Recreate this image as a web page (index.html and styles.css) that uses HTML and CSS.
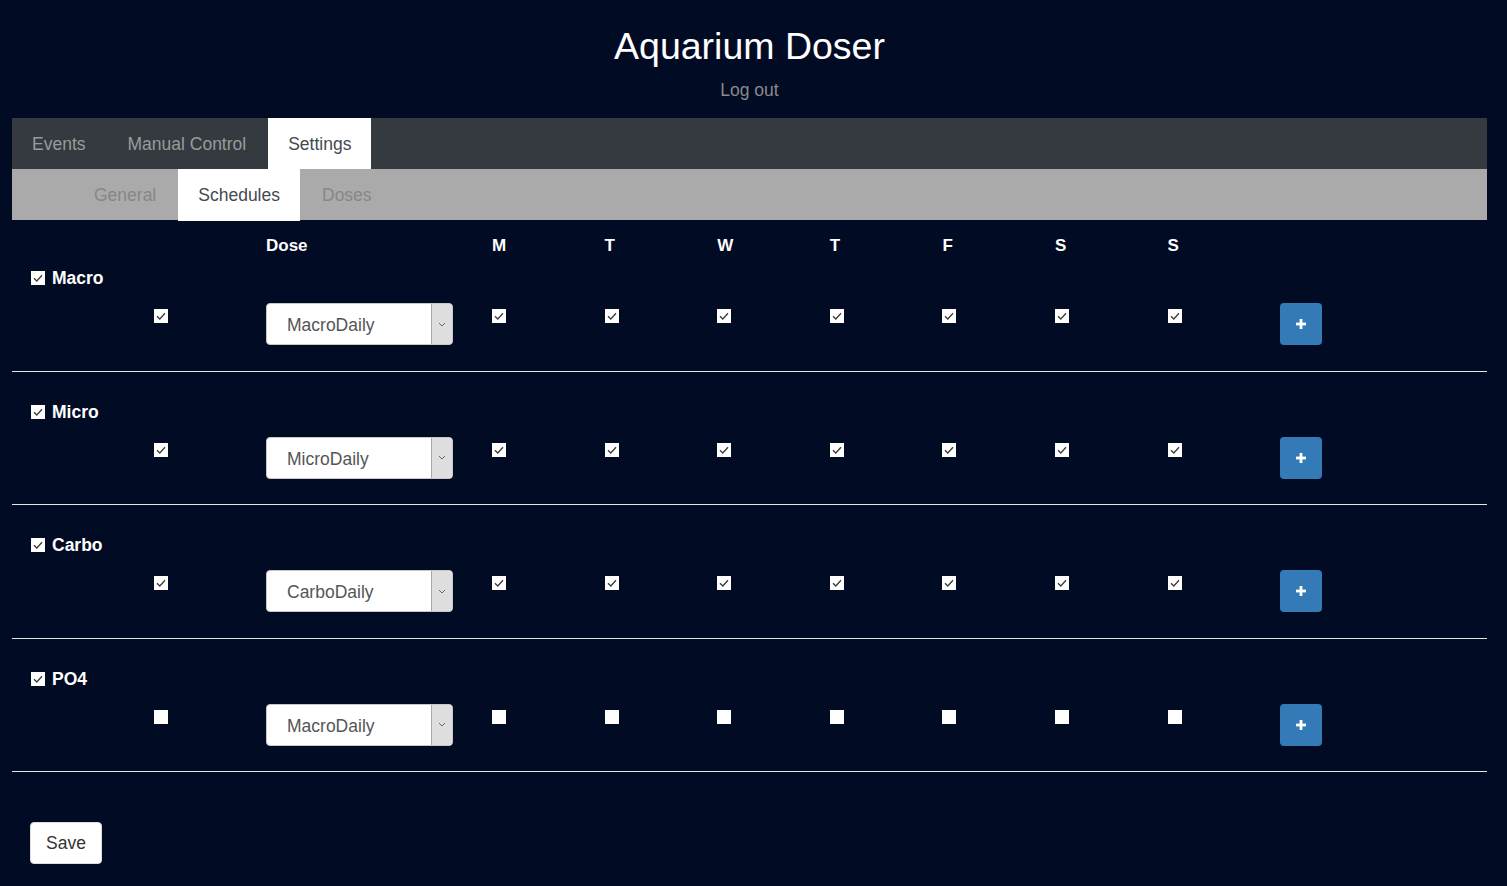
FILE: index.html
```html
<!DOCTYPE html>
<html lang="en">
<head>
<meta charset="utf-8">
<title>Aquarium Doser</title>
<link rel="stylesheet" href="styles.css">
</head>
<body>
<div class="container">
  <header class="page-head">
    <h1 class="title">Aquarium Doser</h1>
    <a class="logout">Log out</a>
  </header>
  <nav class="tabs main-tabs">
    <span class="tab">Events</span>
    <span class="tab">Manual Control</span>
    <span class="tab active">Settings</span>
  </nav>
  <nav class="tabs sub-tabs">
    <span class="tab">General</span>
    <span class="tab active">Schedules</span>
    <span class="tab">Doses</span>
  </nav>

  <section class="sched first">
    <div class="grid head">
      <span></span><span></span>
      <span class="hd">Dose</span>
      <span class="hd">M</span><span class="hd">T</span><span class="hd">W</span><span class="hd">T</span><span class="hd">F</span><span class="hd">S</span><span class="hd">S</span>
      <span></span>
    </div>
    <div class="name"><span class="cb"><svg viewBox="0 0 14 14"><polyline points="3,7.2 5.8,10 11,4.2"/></svg></span>Macro</div>
    <div class="grid line">
      <span></span>
      <span class="cb"><svg viewBox="0 0 14 14"><polyline points="3,7.2 5.8,10 11,4.2"/></svg></span>
      <div class="select"><span class="val">MacroDaily</span><span class="arrow"><svg viewBox="0 0 8 5"><polyline points="1,1 4,4 7,1"/></svg></span></div>
      <span class="cb"><svg viewBox="0 0 14 14"><polyline points="3,7.2 5.8,10 11,4.2"/></svg></span>
      <span class="cb"><svg viewBox="0 0 14 14"><polyline points="3,7.2 5.8,10 11,4.2"/></svg></span>
      <span class="cb"><svg viewBox="0 0 14 14"><polyline points="3,7.2 5.8,10 11,4.2"/></svg></span>
      <span class="cb"><svg viewBox="0 0 14 14"><polyline points="3,7.2 5.8,10 11,4.2"/></svg></span>
      <span class="cb"><svg viewBox="0 0 14 14"><polyline points="3,7.2 5.8,10 11,4.2"/></svg></span>
      <span class="cb"><svg viewBox="0 0 14 14"><polyline points="3,7.2 5.8,10 11,4.2"/></svg></span>
      <span class="cb"><svg viewBox="0 0 14 14"><polyline points="3,7.2 5.8,10 11,4.2"/></svg></span>
      <button class="plus"><svg viewBox="0 0 10 10"><rect x="3.6" y="0" width="2.8" height="10"/><rect x="0" y="3.6" width="10" height="2.8"/></svg></button>
    </div>
  </section>

  <section class="sched">
    <div class="name"><span class="cb"><svg viewBox="0 0 14 14"><polyline points="3,7.2 5.8,10 11,4.2"/></svg></span>Micro</div>
    <div class="grid line">
      <span></span>
      <span class="cb"><svg viewBox="0 0 14 14"><polyline points="3,7.2 5.8,10 11,4.2"/></svg></span>
      <div class="select"><span class="val">MicroDaily</span><span class="arrow"><svg viewBox="0 0 8 5"><polyline points="1,1 4,4 7,1"/></svg></span></div>
      <span class="cb"><svg viewBox="0 0 14 14"><polyline points="3,7.2 5.8,10 11,4.2"/></svg></span>
      <span class="cb"><svg viewBox="0 0 14 14"><polyline points="3,7.2 5.8,10 11,4.2"/></svg></span>
      <span class="cb"><svg viewBox="0 0 14 14"><polyline points="3,7.2 5.8,10 11,4.2"/></svg></span>
      <span class="cb"><svg viewBox="0 0 14 14"><polyline points="3,7.2 5.8,10 11,4.2"/></svg></span>
      <span class="cb"><svg viewBox="0 0 14 14"><polyline points="3,7.2 5.8,10 11,4.2"/></svg></span>
      <span class="cb"><svg viewBox="0 0 14 14"><polyline points="3,7.2 5.8,10 11,4.2"/></svg></span>
      <span class="cb"><svg viewBox="0 0 14 14"><polyline points="3,7.2 5.8,10 11,4.2"/></svg></span>
      <button class="plus"><svg viewBox="0 0 10 10"><rect x="3.6" y="0" width="2.8" height="10"/><rect x="0" y="3.6" width="10" height="2.8"/></svg></button>
    </div>
  </section>

  <section class="sched">
    <div class="name"><span class="cb"><svg viewBox="0 0 14 14"><polyline points="3,7.2 5.8,10 11,4.2"/></svg></span>Carbo</div>
    <div class="grid line">
      <span></span>
      <span class="cb"><svg viewBox="0 0 14 14"><polyline points="3,7.2 5.8,10 11,4.2"/></svg></span>
      <div class="select"><span class="val">CarboDaily</span><span class="arrow"><svg viewBox="0 0 8 5"><polyline points="1,1 4,4 7,1"/></svg></span></div>
      <span class="cb"><svg viewBox="0 0 14 14"><polyline points="3,7.2 5.8,10 11,4.2"/></svg></span>
      <span class="cb"><svg viewBox="0 0 14 14"><polyline points="3,7.2 5.8,10 11,4.2"/></svg></span>
      <span class="cb"><svg viewBox="0 0 14 14"><polyline points="3,7.2 5.8,10 11,4.2"/></svg></span>
      <span class="cb"><svg viewBox="0 0 14 14"><polyline points="3,7.2 5.8,10 11,4.2"/></svg></span>
      <span class="cb"><svg viewBox="0 0 14 14"><polyline points="3,7.2 5.8,10 11,4.2"/></svg></span>
      <span class="cb"><svg viewBox="0 0 14 14"><polyline points="3,7.2 5.8,10 11,4.2"/></svg></span>
      <span class="cb"><svg viewBox="0 0 14 14"><polyline points="3,7.2 5.8,10 11,4.2"/></svg></span>
      <button class="plus"><svg viewBox="0 0 10 10"><rect x="3.6" y="0" width="2.8" height="10"/><rect x="0" y="3.6" width="10" height="2.8"/></svg></button>
    </div>
  </section>

  <section class="sched">
    <div class="name"><span class="cb"><svg viewBox="0 0 14 14"><polyline points="3,7.2 5.8,10 11,4.2"/></svg></span>PO4</div>
    <div class="grid line">
      <span></span>
      <span class="cb"></span>
      <div class="select"><span class="val">MacroDaily</span><span class="arrow"><svg viewBox="0 0 8 5"><polyline points="1,1 4,4 7,1"/></svg></span></div>
      <span class="cb"></span>
      <span class="cb"></span>
      <span class="cb"></span>
      <span class="cb"></span>
      <span class="cb"></span>
      <span class="cb"></span>
      <span class="cb"></span>
      <button class="plus"><svg viewBox="0 0 10 10"><rect x="3.6" y="0" width="2.8" height="10"/><rect x="0" y="3.6" width="10" height="2.8"/></svg></button>
    </div>
  </section>

  <div class="actions">
    <button class="save">Save</button>
  </div>
</div>
</body>
</html>
```

FILE: styles.css
```css
html, body {
  margin: 0;
  padding: 0;
}
body {
  background: #020b24;
  color: #ffffff;
  font-family: "Liberation Sans", Arial, sans-serif;
  font-size: 17.5px;
  min-height: 886px;
}
.container {
  margin: 0 20px 0 12px;
}
.page-head {
  text-align: center;
  padding: 26px 0 16px;
}
.title {
  margin: 0;
  font-size: 37.5px;
  font-weight: normal;
  line-height: 41px;
  color: #ffffff;
}
.logout {
  display: block;
  margin-top: 11px;
  line-height: 24px;
  color: #8a8a8a;
}
.tabs {
  display: flex;
  height: 51px;
}
.tab {
  padding: 1px 20px 0;
  margin-right: 2px;
  line-height: 50px;
  height: 50px;
}
.main-tabs {
  background: #343a40;
}
.main-tabs .tab {
  color: #9a9a9a;
}
.sub-tabs {
  background: #aaaaaa;
  padding-left: 62px;
}
.sub-tabs .tab {
  color: #878787;
}
.tab.active {
  background: #ffffff;
  color: #444a50;
}
.sub-tabs .tab.active {
  height: 51px;
}
.sched {
  border-bottom: 1px solid #e6e6e6;
  padding: 28px 0 25.5px;
}
.sched.first {
  padding-top: 14px;
}
.grid {
  display: grid;
  grid-template-columns: 142px 112px 226px repeat(7, 112.6px) 42px;
}
.head {
  line-height: 24px;
  margin-bottom: 8px;
}
.hd {
  font-weight: bold;
  font-size: 17px;
}
.name {
  display: flex;
  align-items: center;
  gap: 7px;
  padding-left: 19px;
  line-height: 24px;
  font-weight: bold;
}
.line {
  margin-top: 13px;
  height: 42px;
}
.cb {
  display: block;
  width: 14px;
  height: 14px;
  background: #ffffff;
  box-sizing: border-box;
  flex: none;
}
.line .cb {
  margin-top: 6px;
}
.cb svg {
  display: block;
  width: 14px;
  height: 14px;
  fill: none;
  stroke: #3a3a3a;
  stroke-width: 1.3;
}
.select {
  display: flex;
  width: 187px;
  height: 42px;
  box-sizing: border-box;
  background: #ffffff;
  border: 1px solid #c8c8c8;
  border-radius: 4px;
  overflow: hidden;
}
.val {
  flex: 1;
  padding: 2px 0 0 20px;
  line-height: 38px;
  color: #555555;
}
.arrow {
  width: 20px;
  background: #dedede;
  border-left: 1px solid #a9a9a9;
  display: flex;
  align-items: center;
  justify-content: center;
}
.arrow svg {
  width: 8px;
  height: 5px;
  fill: none;
  stroke: #666;
  stroke-width: 1;
}
.plus {
  width: 42px;
  height: 42px;
  padding: 0;
  border: none;
  border-radius: 4px;
  background: #337ab7;
  display: flex;
  align-items: center;
  justify-content: center;
}
.plus svg {
  width: 10px;
  height: 10px;
  fill: #ffffff;
}
.actions {
  padding: 50px 0 0 18px;
}
.save {
  width: 72px;
  height: 42px;
  background: #ffffff;
  border: 1px solid #dddddd;
  border-radius: 4px;
  font-family: "Liberation Sans", Arial, sans-serif;
  font-size: 17.5px;
  color: #333333;
  padding: 0;
}
```
